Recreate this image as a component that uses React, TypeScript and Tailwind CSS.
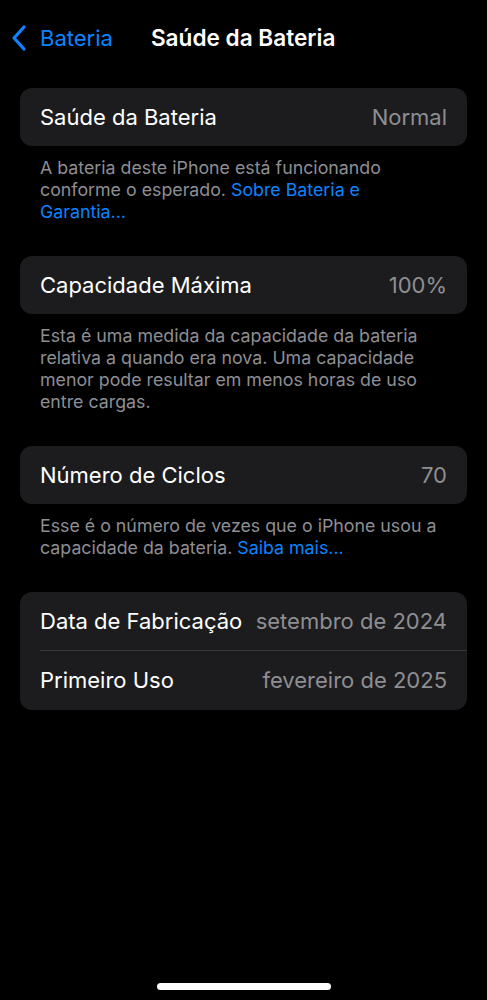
import { ReactNode } from 'react';

function Row({ label, value, last = true, tall = false }: { label: string; value: string; last?: boolean; tall?: boolean }) {
  return (
    <div className={`flex items-center pl-5 ${tall ? 'h-[59px]' : 'h-[58px]'}`}>
      <div className={`flex h-full flex-1 items-center justify-between pr-5 ${last ? '' : 'border-b border-[#38383a]'}`}>
        <span className="text-[22px] text-white">{label}</span>
        <span className="text-[22px] text-[#8e8e93]">{value}</span>
      </div>
    </div>
  );
}

function Footer({ children }: { children: ReactNode }) {
  return <p className="mt-[11px] px-5 text-[17.8px] leading-[22px] text-[#8e8e93]">{children}</p>;
}

export default function App() {
  return (
    <div className="relative h-[1000px] w-full bg-black font-['Inter',sans-serif]">
      {/* Nav */}
      <div className="flex h-[76px] items-center pl-[10px]">
        <svg width="18" height="28" viewBox="0 0 18 28" className="mr-[12px]">
          <path d="M14 3 L4 14 L14 25" fill="none" stroke="#0a84ff" strokeWidth="3.2" strokeLinecap="round" strokeLinejoin="round" />
        </svg>
        <span className="text-[22px] text-[#0a84ff]">Bateria</span>
        <span className="ml-[38px] text-[22.6px] font-semibold text-white">Saúde da Bateria</span>
      </div>

      <div className="px-5 pt-[12px]">
        <div className="rounded-xl bg-[#1c1c1e]">
          <Row label="Saúde da Bateria" value="Normal" />
        </div>
        <Footer>
          A bateria deste iPhone está funcionando conforme o esperado.{' '}
          <span className="text-[#0a84ff]">Sobre Bateria e Garantia...</span>
        </Footer>

        <div className="mt-[33px] rounded-xl bg-[#1c1c1e]">
          <Row label="Capacidade Máxima" value="100%" />
        </div>
        <Footer>
          Esta é uma medida da capacidade da bateria relativa a quando era nova. Uma capacidade menor pode resultar em menos horas de uso entre cargas.
        </Footer>

        <div className="mt-[33px] rounded-xl bg-[#1c1c1e]">
          <Row label="Número de Ciclos" value="70" />
        </div>
        <Footer>
          Esse é o número de vezes que o iPhone usou a capacidade da bateria.{' '}
          <span className="text-[#0a84ff]">Saiba mais...</span>
        </Footer>

        <div className="mt-[33px] overflow-hidden rounded-xl bg-[#1c1c1e]">
          <Row label="Data de Fabricação" value="setembro de 2024" last={false} tall />
          <Row label="Primeiro Uso" value="fevereiro de 2025" tall />
        </div>
      </div>

      {/* Home indicator */}
      <div className="absolute bottom-[10px] left-1/2 h-[7px] w-[174px] -translate-x-1/2 rounded-full bg-white" />
    </div>
  );
}
